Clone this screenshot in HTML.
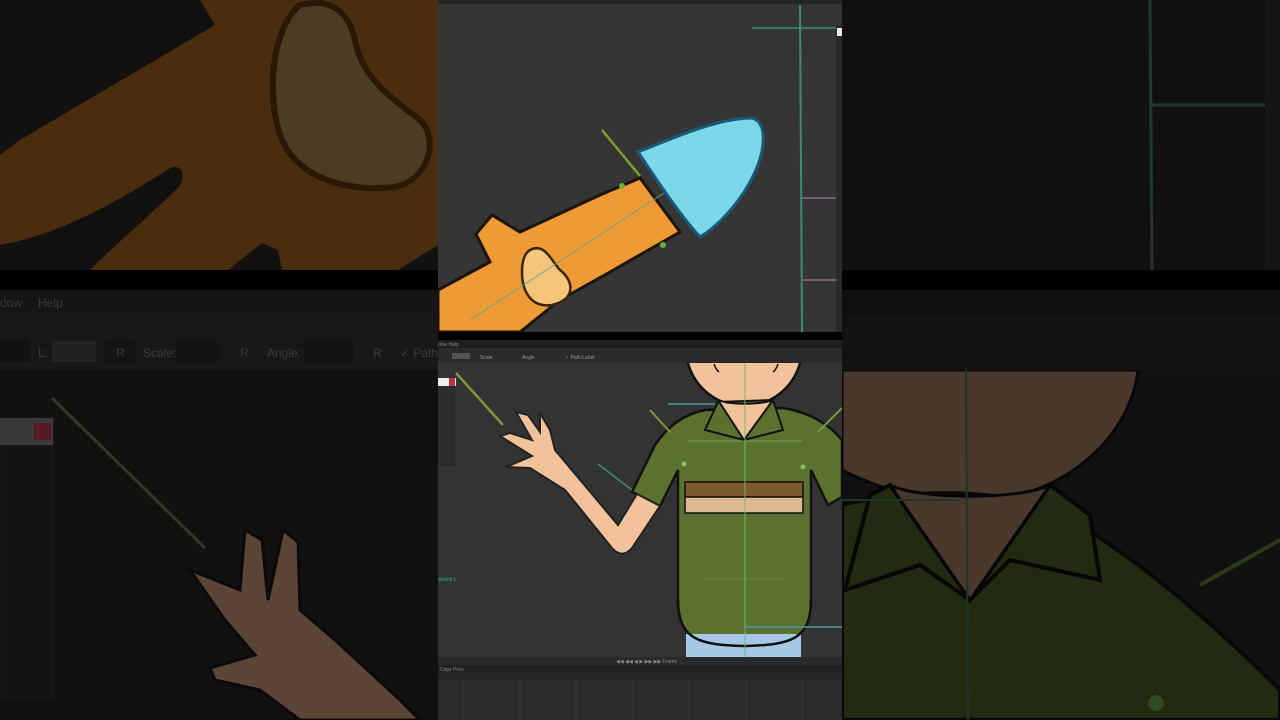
<!DOCTYPE html>
<html><head><meta charset="utf-8"><style>
html,body{margin:0;padding:0;background:#121212;overflow:hidden}
svg{display:block}
text{font-family:"Liberation Sans",sans-serif}
</style></head><body>
<svg width="1280" height="720" viewBox="0 0 1280 720" xmlns="http://www.w3.org/2000/svg">
<defs>
<clipPath id="cv"><rect x="438" y="363" width="404" height="294"/></clipPath>
<clipPath id="tp"><rect x="438" y="0" width="404" height="332"/></clipPath>
<clipPath id="rb"><rect x="842" y="370" width="438" height="350"/></clipPath>
</defs>
<!-- LEFT SIDE -->
<rect x="0" y="0" width="438" height="720" fill="#121212"/>
<rect x="0" y="0" width="438" height="270" fill="#4a2c0e"/>
<path d="M0 0 L200 0 L215 25 L20 140 L0 155 Z" fill="#121110"/>
<path d="M0 245 C60 235 120 200 172 167 C185 165 185 180 178 188 C150 215 115 245 90 270 L0 270 Z" fill="#121110"/>
<path d="M228 270 L262 243 L278 250 L282 270 Z" fill="#121110"/>
<path d="M398 270 L438 245 L438 270 Z" fill="#121110"/>
<path d="M300 5 C330 -2 348 10 355 40 C362 80 395 100 420 120 C440 140 428 180 395 187 C350 192 300 180 282 140 C266 100 270 30 300 5 Z" fill="#4e3c22" stroke="#2a1806" stroke-width="6"/>
<rect x="0" y="270" width="438" height="20" fill="#000"/>
<rect x="0" y="290" width="438" height="24" fill="#151515"/>
<text x="0" y="307" font-size="12" fill="#3a3a3a">dow</text>
<text x="38" y="307" font-size="12" fill="#3a3a3a">Help</text>
<rect x="0" y="314" width="438" height="56" fill="#181818"/>
<rect x="0" y="340" width="30" height="22" fill="#111"/>
<text x="38" y="357" font-size="12" fill="#3a3a3a">L:</text>
<rect x="52" y="341" width="44" height="21" fill="#222"/>
<rect x="105" y="341" width="30" height="21" fill="#141414"/>
<text x="116" y="357" font-size="12" fill="#3a3a3a">R</text>
<text x="143" y="357" font-size="12" fill="#3a3a3a">Scale:</text>
<rect x="176" y="341" width="44" height="21" fill="#141414"/>
<text x="240" y="357" font-size="12" fill="#3a3a3a">R</text>
<text x="267" y="357" font-size="12" fill="#3a3a3a">Angle:</text>
<rect x="304" y="341" width="50" height="21" fill="#141414"/>
<text x="373" y="357" font-size="12" fill="#3a3a3a">R</text>
<text x="400" y="357" font-size="12" fill="#3a3a3a">✓ Path</text>
<rect x="0" y="370" width="438" height="350" fill="#111"/>
<rect x="0" y="418" width="53" height="280" fill="#141414" stroke="#1c1c1c"/>
<rect x="0" y="418" width="53" height="27" fill="#3a3a3a"/>
<rect x="34" y="423" width="17" height="17" fill="#5a1a22"/>
<line x1="52" y1="398" x2="205" y2="548" stroke="#2f3a22" stroke-width="3"/>
<path d="M190 570 L240 590 L245 530 L262 540 L268 600 L283 530 L298 542 L300 610 L335 640 L400 700 L420 720 L300 720 L260 690 L215 680 L210 668 L255 655 L225 620 Z" fill="#5a4536" stroke="#0c0a08" stroke-width="3"/>
<!-- RIGHT SIDE -->
<rect x="842" y="0" width="438" height="270" fill="#111"/>
<line x1="1150" y1="0" x2="1152" y2="270" stroke="#1c3a30" stroke-width="3"/>
<line x1="1152" y1="105" x2="1265" y2="105" stroke="#1c3a30" stroke-width="3"/>
<rect x="1265" y="0" width="15" height="270" fill="#161616"/>
<rect x="842" y="270" width="438" height="20" fill="#000"/>
<rect x="842" y="290" width="438" height="24" fill="#101010"/>
<rect x="842" y="314" width="438" height="56" fill="#131313"/>
<rect x="842" y="370" width="438" height="350" fill="#111"/>
<g clip-path="url(#rb)">
<path d="M842 370 L1138 370 C1130 440 1060 500 970 503 C920 502 870 485 842 470 Z" fill="#4a382c" stroke="#080808" stroke-width="3"/>
<path d="M842 505 C900 490 1000 485 1060 515 C1120 545 1200 610 1280 690 L1280 720 L842 720 Z" fill="#222a12" stroke="#080808" stroke-width="4"/>
<path d="M890 485 L970 600 L1050 485 L1090 515 L1100 580 L1010 560 L970 600 L920 565 L845 590 L870 495 Z" fill="#222a12" stroke="#060606" stroke-width="4"/>
<path d="M890 485 L970 600 L1050 485 C1020 500 920 500 890 485 Z" fill="#4a382c" stroke="#060606" stroke-width="3"/>
<line x1="966" y1="370" x2="968" y2="720" stroke="#1f3328" stroke-width="2"/>
<line x1="842" y1="500" x2="960" y2="500" stroke="#1f3328" stroke-width="2"/>
<line x1="1200" y1="585" x2="1280" y2="540" stroke="#2a3a1a" stroke-width="4"/>
<circle cx="1156" cy="703" r="8" fill="#2e4a22"/>
</g>
<!-- CENTER TOP PANEL -->
<rect x="438" y="0" width="404" height="332" fill="#353535"/>
<rect x="438" y="0" width="404" height="4" fill="#262626"/>
<g clip-path="url(#tp)">
<line x1="800" y1="5" x2="802" y2="332" stroke="#3c8a78" stroke-width="2"/>
<line x1="752" y1="28" x2="836" y2="28" stroke="#3c8a78" stroke-width="1.5"/>
<line x1="802" y1="198" x2="836" y2="198" stroke="#8a6a8a" stroke-width="1.5"/>
<line x1="802" y1="280" x2="836" y2="280" stroke="#8a6a8a" stroke-width="1.5"/>
<rect x="836" y="25" width="6" height="307" fill="#2a2a2a"/>
<rect x="837" y="28" width="5" height="8" fill="#eee"/>
<line x1="602" y1="130" x2="640" y2="176" stroke="#7aa030" stroke-width="2.5"/>
<path d="M438 290 L490 262 L476 234 L492 215 L520 232 L600 195 L640 178 L680 232 L610 272 L560 300 L520 332 L438 332 Z" fill="#f09a35" stroke="#1c1408" stroke-width="3"/>
<path d="M530 250 C545 242 552 262 560 270 C575 282 575 300 552 305 C530 308 522 290 522 272 C522 260 525 253 530 250 Z" fill="#f5c57a" stroke="#3a2410" stroke-width="2.5"/>
<line x1="470" y1="320" x2="745" y2="140" stroke="#5aa890" stroke-width="1.2" opacity="0.7"/>
<path d="M638 152 C680 135 720 118 752 118 C768 122 765 150 755 172 C740 205 715 228 700 237 C680 215 660 185 638 152 Z" fill="#7ad8e8" stroke="#1a5a78" stroke-width="3"/>
<circle cx="622" cy="186" r="3" fill="#6ab040"/>
<circle cx="663" cy="245" r="3" fill="#6ab040"/>
</g>
<!-- CENTER BOTTOM PANEL -->
<rect x="438" y="332" width="404" height="8" fill="#000"/>
<rect x="438" y="340" width="404" height="8" fill="#1e1e1e"/>
<text x="438" y="346" font-size="5" fill="#888">dow  Help</text>
<rect x="438" y="348" width="404" height="15" fill="#2a2a2a"/>
<rect x="452" y="353" width="18" height="6" fill="#555"/>
<text x="480" y="359" font-size="5" fill="#999">Scale</text>
<text x="522" y="359" font-size="5" fill="#999">Angle</text>
<text x="565" y="359" font-size="5" fill="#999">✓ Path   Label</text>
<rect x="438" y="363" width="404" height="294" fill="#333333"/>
<g clip-path="url(#cv)">
<rect x="438" y="377" width="18" height="90" fill="#2d2d2d" stroke="#3a3a3a" stroke-width="0.5"/>
<rect x="438" y="378" width="18" height="8" fill="#eee"/>
<rect x="449" y="378" width="6" height="8" fill="#c03040"/>
<text x="438" y="581" font-size="5" fill="#3ab0a0">sketch L</text>
<circle cx="744" cy="348" r="58" fill="#f2c29a" stroke="#111" stroke-width="2.5"/>
<path d="M714 364 q2 6 5 8 M778 364 q-2 6 -5 8" stroke="#111" stroke-width="1.5" fill="none"/>
<path d="M705 410 C680 415 665 430 655 445 L632 492 L660 506 L678 470 L678 600 C678 640 700 645 744 646 C790 645 811 640 811 600 L811 470 L828 505 L842 497 L842 440 C830 425 810 412 782 408 Z" fill="#5a7130" stroke="#111" stroke-width="2.5"/>
<path d="M718 402 L705 430 L744 440 L783 430 L773 400 Z" fill="#5a7130" stroke="#111" stroke-width="2"/>
<path d="M718 400 L744 440 L773 400 C760 405 730 405 718 400 Z" fill="#f2c29a" stroke="#111" stroke-width="2"/>
<rect x="685" y="482" width="118" height="15" fill="#7d5a30" stroke="#111" stroke-width="1.5"/>
<rect x="685" y="497" width="118" height="16" fill="#dcb894" stroke="#111" stroke-width="1.5"/>
<rect x="686" y="634" width="115" height="23" fill="#a6c8e6"/>
<path d="M678 600 C678 640 700 645 744 646 C790 645 811 640 811 600" fill="none" stroke="#111" stroke-width="2.5"/>
<path d="M530 468 L506 467 L532 456 L500 436 L510 433 L532 440 L516 412 L528 415 L540 432 L540 413 L550 430 L555 450 L618 525 L637 494 L660 506 L632 548 C625 556 618 555 612 548 L565 490 Z" fill="#f2c29a" stroke="#222" stroke-width="2"/>
<line x1="456" y1="373" x2="503" y2="425" stroke="#7a9a40" stroke-width="2.5"/>
<line x1="598" y1="464" x2="632" y2="490" stroke="#3a8a80" stroke-width="1.5"/>
<line x1="650" y1="410" x2="670" y2="432" stroke="#7a9a40" stroke-width="2"/>
<line x1="818" y1="432" x2="842" y2="408" stroke="#7a9a40" stroke-width="2"/>
<line x1="745" y1="363" x2="745" y2="657" stroke="#6ac070" stroke-width="1.2" opacity="0.8"/>
<line x1="688" y1="441" x2="802" y2="441" stroke="#8ab860" stroke-width="1" opacity="0.7"/>
<line x1="668" y1="404" x2="715" y2="404" stroke="#4aa0a0" stroke-width="1.5"/>
<line x1="745" y1="627" x2="842" y2="627" stroke="#4aa0a0" stroke-width="1.5"/>
<line x1="705" y1="579" x2="783" y2="579" stroke="#7a9a60" stroke-width="1" opacity="0.6"/>
<circle cx="684" cy="464" r="2.5" fill="#8ac060"/>
<circle cx="803" cy="467" r="2.5" fill="#8ac060"/>
</g>
<!-- timeline -->
<rect x="438" y="657" width="404" height="8" fill="#2a2a2a"/>
<text x="616" y="663" font-size="5" fill="#888">◀◀ ◀◀ ◀ ▶ ▶▶ ▶▶  Frame</text>
<rect x="438" y="665" width="404" height="8" fill="#222"/>
<text x="440" y="671" font-size="5" fill="#888">Copy Prev.</text>
<rect x="438" y="673" width="404" height="7" fill="#262626"/>
<rect x="438" y="680" width="404" height="40" fill="#2c2c2c"/>
<g stroke="#3a3a3a" stroke-width="1">
<line x1="463" y1="680" x2="463" y2="720"/><line x1="520" y1="680" x2="520" y2="720"/><line x1="576" y1="680" x2="576" y2="720"/><line x1="633" y1="680" x2="633" y2="720"/><line x1="689" y1="680" x2="689" y2="720"/><line x1="746" y1="680" x2="746" y2="720"/><line x1="802" y1="680" x2="802" y2="720"/>
</g>
</svg>
</body></html>
